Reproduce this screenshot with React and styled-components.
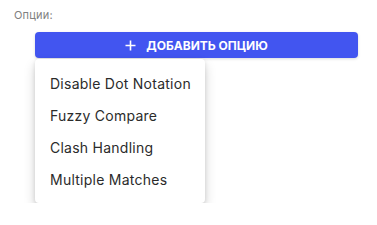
import React from "react";
import styled, { createGlobalStyle } from "styled-components";

const GlobalStyle = createGlobalStyle`
  body {
    margin: 0;
    background: #fff;
    font-family: Inter, "Noto Sans", sans-serif;
  }
`;

const Page = styled.div`
  padding: 8px 19px 0 14px;
`;

const Label = styled.div`
  font-size: 11px;
  line-height: 14px;
  letter-spacing: 0.2px;
  color: #808080;
  margin-bottom: 10px;
`;

const Field = styled.div`
  display: flex;
  flex-direction: column;
  align-items: flex-start;
  margin-left: 21px;
`;

const AddButton = styled.button`
  width: 100%;
  height: 26px;
  border: none;
  border-radius: 4px;
  background: #4255f0;
  color: #fff;
  font-family: Inter, "Noto Sans", sans-serif;
  font-weight: 700;
  font-size: 12px;
  display: flex;
  align-items: center;
  justify-content: center;
  gap: 10px;
  padding: 0;
  box-shadow: 0 1px 3px rgba(0, 0, 0, 0.15);
`;

const Menu = styled.ul`
  width: 170px;
  margin: 1px 0 0;
  padding: 8px 0;
  list-style: none;
  background: #fff;
  border-radius: 4px;
  box-shadow: 0 6px 12px rgba(0, 0, 0, 0.18), 0 1px 4px rgba(0, 0, 0, 0.1);
`;

const Item = styled.li`
  height: 32px;
  display: flex;
  align-items: center;
  padding-left: 15px;
  font-size: 14px;
  letter-spacing: 0.25px;
  color: #2b2b2b;
`;

const items = ["Disable Dot Notation", "Fuzzy Compare", "Clash Handling", "Multiple Matches"];

export default function App() {
  return (
    <>
      <GlobalStyle />
      <Page>
        <Label>Опции:</Label>
        <Field>
          <AddButton>
            <svg width="11" height="11" viewBox="0 0 11 11">
              <path d="M5.5 0.5v10M0.5 5.5h10" stroke="#fff" strokeWidth="1.6" />
            </svg>
            ДОБАВИТЬ ОПЦИЮ
          </AddButton>
          <Menu>
            {items.map((t) => (
              <Item key={t}>{t}</Item>
            ))}
          </Menu>
        </Field>
      </Page>
    </>
  );
}
